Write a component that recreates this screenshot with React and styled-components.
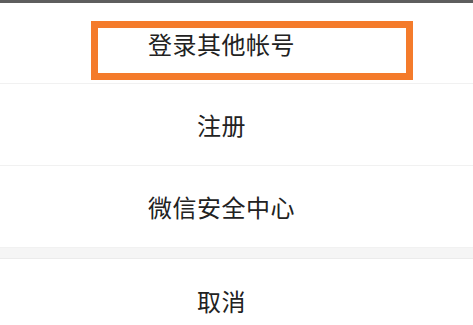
import styled, { createGlobalStyle } from 'styled-components';

const GlobalStyle = createGlobalStyle`
    html, body {
        margin: 0;
        padding: 0;
        background: #ffffff;
    }
`;

const Sheet = styled.div`
    width: 473px;
    height: 325px;
    overflow: hidden;
    background: #ffffff;
    font-family: "Noto Sans CJK SC", "Noto Sans", sans-serif;
    border-top: 3px solid #5e5e5e;
    box-sizing: border-box;
`;

const Row = styled.div`
    position: relative;
    height: ${props => props.$height}px;
    display: flex;
    align-items: center;
    justify-content: center;
    padding-right: 30px;
    padding-top: ${props => props.$shift || 0}px;
    box-sizing: border-box;
    border-bottom: ${props => props.$last ? 'none' : '1px solid #f1f1f1'};
    font-size: 24px;
    color: #222222;
    letter-spacing: 0.5px;
`;

const Gap = styled.div`
    height: 10px;
    background: #f5f5f5;
    border-bottom: 1px solid #ebebeb;
`;

const Highlight = styled.div`
    position: absolute;
    left: 91px;
    top: 18px;
    width: 322px;
    height: 59px;
    border: 7.5px solid #f47b2b;
    box-sizing: border-box;
    pointer-events: none;
`;

function App() {
    return (
        <>
            <GlobalStyle />
            <Sheet>
                <Row $height={81} $shift={-2}>
                    <Highlight />
                    登录其他帐号
                </Row>
                <Row $height={82} $shift={0}>注册</Row>
                <Row $height={82} $shift={0}>微信安全中心</Row>
                <Gap />
                <Row $height={82} $shift={1} $last>取消</Row>
            </Sheet>
        </>
    );
}

export default App;
